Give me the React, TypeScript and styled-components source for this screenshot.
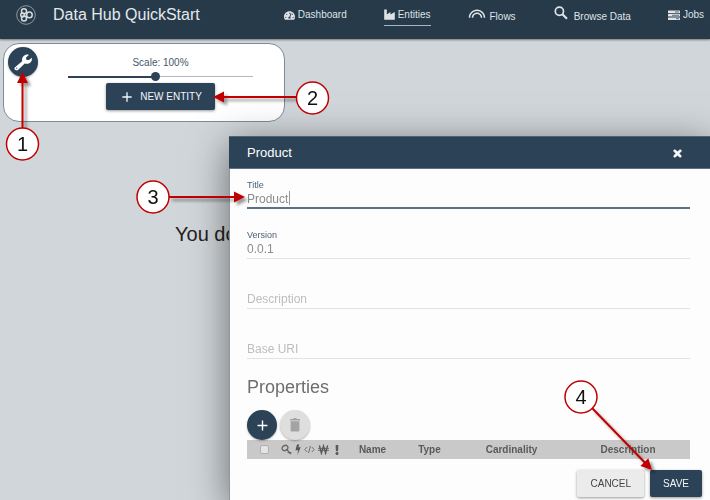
import React, { useState } from "react";
import styled, { createGlobalStyle } from "styled-components";
import { FaTachometerAlt, FaExclamation, FaTimes } from "react-icons/fa";
import { MdAdd, MdLooks } from "react-icons/md";

const navy = "#2b4257";
const red = "#c00000";

const GlobalStyle = createGlobalStyle`
  * { box-sizing: border-box; }
  body {
    margin: 0;
    background: #d1d6da;
    font-family: "Liberation Sans", Arial, sans-serif;
    font-size: 10px;
    color: #222;
    overflow: hidden;
  }
  button, input { font-family: inherit; }
`;

const Page = styled.div`
  min-height: 100vh;
`;

const TopBar = styled.header`
  display: flex;
  align-items: flex-start;
  justify-content: space-between;
  height: 39px;
  padding: 0 6px 0 16px;
  background: #263a4a;
  color: #e4e8ea;
  box-shadow: 0 1px 2px rgba(0, 0, 0, 0.45);
`;

const Brand = styled.a`
  display: flex;
  align-items: center;
  gap: 17px;
  height: 30px;
  font-size: 16px;
  white-space: nowrap;
  color: inherit;
  text-decoration: none;
`;

const Nav = styled.nav`
  display: flex;
  gap: 37px;
`;

const NavLink = styled.a<{ $active?: boolean; $low?: boolean }>`
  display: flex;
  align-items: ${(p) => (p.$low ? "flex-end" : "center")};
  gap: ${(p) => (p.$low ? 4 : 3)}px;
  height: ${(p) => (p.$low ? 23 : 26)}px;
  padding-top: ${(p) => (p.$low ? 0 : 4)}px;
  border-bottom: ${(p) => (p.$active ? "1px solid #aab4bb" : "0")};
  font-size: 10px;
  line-height: 12px;
  white-space: nowrap;
  color: #dfe3e6;
  text-decoration: none;
  svg { flex: none; align-self: ${(p) => (p.$low ? "flex-start" : "center")}; margin-top: ${(p) => (p.$low ? 5 : 0)}px; }
`;

const ToolPanel = styled.section`
  display: flex;
  width: 282px;
  height: 79px;
  margin: 4px 0 0 3px;
  padding: 3px 31px 0 4px;
  background: #fff;
  border: 1px solid #7c8c9a;
  border-radius: 16px;
`;

const RoundButton = styled.button<{ $muted?: boolean }>`
  display: flex;
  align-items: center;
  justify-content: center;
  flex: none;
  width: 30px;
  height: 30px;
  padding: 0;
  border: 0;
  border-radius: 50%;
  background: ${(p) => (p.$muted ? "#dedede" : navy)};
  color: ${(p) => (p.$muted ? "#a3a3a3" : "#fff")};
  box-shadow: 0 1px 2px rgba(0, 0, 0, 0.3);
`;

const ToolControls = styled.div`
  display: flex;
  flex: 1;
  flex-direction: column;
  align-items: center;
  padding: 9px 0 0 30px;
`;

const ScaleLabel = styled.label`
  font-size: 10px;
  line-height: 14px;
  color: #46586a;
`;

const ScaleSlider = styled.input<{ $fill: number }>`
  appearance: none;
  width: 100%;
  height: 9px;
  margin: 2px 0;
  background:
    linear-gradient(${navy}, ${navy}) left center / ${(p) => p.$fill}% 2px no-repeat,
    linear-gradient(#b4b8bb, #b4b8bb) center / 100% 1px no-repeat;
  &::-webkit-slider-thumb {
    appearance: none;
    width: 9px;
    height: 9px;
    border-radius: 50%;
    background: ${navy};
  }
`;

const RaisedButton = styled.button<{ $light?: boolean }>`
  display: flex;
  align-items: center;
  justify-content: center;
  gap: 5px;
  height: 27px;
  padding: 0 13px;
  border: 0;
  border-radius: 2px;
  background: ${(p) => (p.$light ? "#ebebeb" : navy)};
  color: ${(p) => (p.$light ? "#444" : "#f4f6f7")};
  font-size: 10px;
  box-shadow: 0 1px 3px rgba(0, 0, 0, 0.4);
`;

const EmptyNotice = styled.h1`
  margin: 100px 0 0 175px;
  font-size: 20px;
  line-height: 24px;
  font-weight: 400;
`;

const DialogLayer = styled.div`
  position: fixed;
  inset: 0;
  display: flex;
  padding: 136px 0 0 229px;
`;

const Dialog = styled.section`
  flex: 1;
  background: #fdfdfd;
  border-left: 1px solid #8e979e;
  box-shadow: 0 8px 36px rgba(0, 0, 0, 0.5);
`;

const DialogHeader = styled.header`
  display: flex;
  align-items: center;
  justify-content: space-between;
  height: 33px;
  margin-left: -1px;
  padding: 0 27px 0 18px;
  border-top: 1px solid #4f6475;
  border-bottom: 1px solid #5f7282;
  background: ${navy};
  color: #fff;
`;

const DialogTitle = styled.h2`
  margin: 0;
  font-size: 13px;
  font-weight: 400;
`;

const CloseButton = styled.button`
  display: flex;
  padding: 2px 0 0;
  border: 0;
  background: none;
  color: #fff;
`;

const DialogBody = styled.div`
  padding: 10px 20px 0 17px;
`;

const Field = styled.div`
  display: flex;
  flex-direction: column;
  height: 30px;
  margin-bottom: 20px;
`;

const FieldLabel = styled.label`
  height: 12px;
  font-size: 9px;
  line-height: 12px;
  color: #4b5f72;
`;

const FieldInput = styled.input<{ $focused?: boolean }>`
  width: 100%;
  height: 18px;
  padding: 0 0 ${(p) => (p.$focused ? 1 : 2)}px;
  border: 0;
  border-bottom: ${(p) => (p.$focused ? "2px solid #5b7184" : "1px solid #e2e2e2")};
  outline: 0;
  background: transparent;
  font-size: 12px;
  line-height: 15px;
  color: #8c8c8c;
  &::placeholder { color: #bdbdbd; opacity: 1; }
`;

const FocusedValue = styled.div`
  display: grid;
  > * { grid-area: 1 / 1; }
`;

const Caret = styled.span`
  width: 43px;
  height: 14px;
  border-right: 1px solid #999;
  pointer-events: none;
`;

const SectionTitle = styled.h3`
  margin: -3px 0 12px;
  font-size: 18px;
  line-height: 22px;
  font-weight: 400;
  color: #6e6e6e;
`;

const PropertyActions = styled.div`
  display: flex;
  gap: 3px;
`;

const PropertyTable = styled.table`
  width: 100%;
  table-layout: fixed;
  border-collapse: collapse;
  background: #c9c9c9;
`;

const HeadCell = styled.th<{ $width?: number }>`
  width: ${(p) => (p.$width ? `${p.$width}px` : "auto")};
  height: 19px;
  padding: 0;
  font-size: 10px;
  line-height: 12px;
  text-align: center;
  color: #5a5a5a;
`;

const Tick = styled.input`
  appearance: none;
  display: block;
  width: 9px;
  height: 9px;
  margin: 0 0 0 13px;
  border: 1px solid #b0b0b0;
  border-radius: 2px;
  background: #e4e4e4;
`;

const FlagIcons = styled.div`
  display: flex;
  align-items: center;
  gap: 3px;
`;

const DialogFooter = styled.footer`
  display: flex;
  justify-content: flex-end;
  gap: 6px;
  padding: 11px 8px 4px;
`;

const CalloutLayer = styled.svg`
  position: fixed;
  top: 0;
  left: 0;
  pointer-events: none;
  font-family: "Liberation Sans", Arial, sans-serif;
  font-size: 20px;
`;

const Logo = () => (
  <svg width="20" height="20" viewBox="0 0 20 20" fill="none" stroke="#d5dadd" aria-hidden="true">
    <circle cx="10" cy="10" r="9.3" strokeWidth="0.8" opacity="0.75" />
    <g strokeWidth="1.5">
      <circle cx="8" cy="6.2" r="2.5" />
      <circle cx="8" cy="13.6" r="2.5" />
      <circle cx="13.4" cy="9.9" r="2.8" />
      <circle cx="6.6" cy="9.9" r="1.9" />
      <path d="M10.2 7.2 11.6 8.2M10.2 12.6 11.6 11.6" />
    </g>
  </svg>
);

const IndustryIcon = () => (
  <svg width="11" height="11" viewBox="0 0 11 11" fill="currentColor" aria-hidden="true">
    <path d="M0.2 10.8V0.4H2.8V5.6L6.4 3V5.6L10.8 3V10.8Z" />
  </svg>
);

const SearchIcon = () => (
  <svg width="17" height="17" viewBox="0 0 17 17" fill="none" stroke="currentColor" aria-hidden="true">
    <circle cx="6.4" cy="6.2" r="4.1" strokeWidth="1.7" />
    <path d="M9.4 9.2 14 13.8" strokeWidth="2.2" />
  </svg>
);

const JobsIcon = () => (
  <svg width="12" height="11" viewBox="0 0 12 11" aria-hidden="true">
    <g fill="currentColor">
      <rect x="0" y="0.6" width="12" height="2.6" rx="0.5" />
      <rect x="0" y="4" width="12" height="2.6" rx="0.5" />
      <rect x="0" y="7.4" width="12" height="2.6" rx="0.5" />
    </g>
    <path d="M7 1.9H11M4 5.3H11M8 8.7H11" stroke="#526472" strokeWidth="0.9" />
  </svg>
);

const WrenchIcon = () => (
  <svg width="20" height="20" viewBox="0 0 20 20" aria-hidden="true">
    <path
      fill="#fff"
      d="M2 15.2 9.2 9.2C8.5 6.7 9.8 4 12.2 3 13.5 2.5 14.8 2.5 15.9 2.9L13 5.4 13.5 7.9 16 8.1 18.8 5.7C19.3 7.9 18.4 10.2 16.4 11.2 14.7 12 13.1 12 11.7 11.5L5 17.9C3.2 19.3 0.2 17.1 2 15.2Z"
    />
    <circle cx="3.7" cy="16.1" r="0.7" fill={navy} />
  </svg>
);

const TrashIcon = () => (
  <svg width="18" height="18" viewBox="0 0 18 18" fill="currentColor" aria-hidden="true">
    <path d="M4 3H7L7.8 2H10.2L11 3H14V4.4H4ZM4.6 5.3H13.4V14.4Q13.4 15.6 12.2 15.6H5.8Q4.6 15.6 4.6 14.4Z" />
  </svg>
);

const KeyIcon = () => (
  <svg width="11" height="11" viewBox="0 0 11 11" fill="none" stroke="#626262" strokeWidth="1.3" aria-hidden="true">
    <ellipse cx="4" cy="4" rx="3" ry="2.4" transform="rotate(-30 4 4)" />
    <path d="M5.8 5.4 9.2 9.4M6.8 8.8 8.2 7.4M8.6 10 10.4 8.4" />
  </svg>
);

const BoltIcon = () => (
  <svg width="6" height="11" viewBox="0 0 6 11" fill="#555" aria-hidden="true">
    <path d="M2 0.4H4.3L3.4 3.4 5.8 3 2.5 10.7 3.1 6 0.4 6.5Z" />
  </svg>
);

const CodeIcon = () => (
  <svg width="11" height="11" viewBox="0 0 11 11" fill="none" stroke="#707070" aria-hidden="true">
    <path d="M3.2 3 0.8 5.5 3.2 8M7.8 3 10.2 5.5 7.8 8M6.4 2 4.6 9" />
  </svg>
);

const WonIcon = () => (
  <svg width="11" height="11" viewBox="0 0 11 11" fill="none" stroke="#5a5a5a" aria-hidden="true">
    <path d="M1.4 1.4 3.4 9.2 5.5 2 7.6 9.2 9.6 1.4" strokeWidth="1.4" />
    <path d="M0 4.4H11M0 6.4H11" strokeWidth="0.8" />
  </svg>
);

type CalloutProps = { n: number; x: number; y: number; from: [number, number]; to: [number, number] };

const Callout = ({ n, x, y, from, to }: CalloutProps) => {
  const dx = to[0] - from[0];
  const dy = to[1] - from[1];
  const length = Math.hypot(dx, dy);
  const angle = (Math.atan2(dy, dx) * 180) / Math.PI;
  return (
    <g>
      <g filter="url(#soft)">
        <g transform={`translate(${from[0]} ${from[1]}) rotate(${angle})`} fill={red}>
          <rect x="0" y="-1" width={length - 9} height="2" />
          <path d={`M${length} 0 L${length - 11} -5.5 V5.5 Z`} />
        </g>
      </g>
      <circle cx={x} cy={y} r="16" fill="#fff" stroke={red} strokeWidth="1.5" />
      <text x={x} y={y + 7} textAnchor="middle" fill="#111">{n}</text>
    </g>
  );
};

export default function App() {
  const [scale, setScale] = useState(47);
  const [title, setTitle] = useState("Product");
  const [version, setVersion] = useState("0.0.1");

  return (
    <Page>
      <GlobalStyle />
      <TopBar>
        <Brand href="#home"><Logo />Data Hub QuickStart</Brand>
        <Nav>
          <NavLink href="#dashboard"><FaTachometerAlt size={11} />Dashboard</NavLink>
          <NavLink href="#entities" $active><IndustryIcon />Entities</NavLink>
          <NavLink href="#flows" $low><MdLooks size={18} />Flows</NavLink>
          <NavLink href="#browse" $low><SearchIcon />Browse Data</NavLink>
          <NavLink href="#jobs"><JobsIcon />Jobs</NavLink>
        </Nav>
      </TopBar>

      <ToolPanel>
        <RoundButton aria-label="Tools"><WrenchIcon /></RoundButton>
        <ToolControls>
          <ScaleLabel htmlFor="scale">Scale: 100%</ScaleLabel>
          <ScaleSlider id="scale" type="range" $fill={scale} value={scale} onChange={(e) => setScale(Number(e.target.value))} />
          <RaisedButton><MdAdd size={16} />NEW ENTITY</RaisedButton>
        </ToolControls>
      </ToolPanel>

      <EmptyNotice>You do</EmptyNotice>

      <DialogLayer>
        <Dialog role="dialog" aria-labelledby="dialog-title">
          <DialogHeader>
            <DialogTitle id="dialog-title">Product</DialogTitle>
            <CloseButton aria-label="Close"><FaTimes size={11} stroke="#fff" strokeWidth={40} /></CloseButton>
          </DialogHeader>
          <DialogBody>
            <Field>
              <FieldLabel htmlFor="title">Title</FieldLabel>
              <FocusedValue>
                <FieldInput id="title" $focused value={title} onChange={(e) => setTitle(e.target.value)} />
                <Caret />
              </FocusedValue>
            </Field>
            <Field>
              <FieldLabel htmlFor="version">Version</FieldLabel>
              <FieldInput id="version" value={version} onChange={(e) => setVersion(e.target.value)} />
            </Field>
            <Field>
              <FieldLabel htmlFor="description" />
              <FieldInput id="description" aria-label="Description" placeholder="Description" />
            </Field>
            <Field>
              <FieldLabel htmlFor="base-uri" />
              <FieldInput id="base-uri" aria-label="Base URI" placeholder="Base URI" />
            </Field>
            <SectionTitle>Properties</SectionTitle>
            <PropertyActions>
              <RoundButton aria-label="Add property"><MdAdd size={17} /></RoundButton>
              <RoundButton $muted aria-label="Delete property"><TrashIcon /></RoundButton>
            </PropertyActions>
            <PropertyTable>
              <thead>
                <tr>
                  <HeadCell $width={34}><Tick type="checkbox" aria-label="Select all" /></HeadCell>
                  <HeadCell $width={62}>
                    <FlagIcons>
                      <KeyIcon /><BoltIcon /><CodeIcon /><WonIcon /><FaExclamation size={10} />
                    </FlagIcons>
                  </HeadCell>
                  <HeadCell $width={59}>Name</HeadCell>
                  <HeadCell $width={55}>Type</HeadCell>
                  <HeadCell $width={109}>Cardinality</HeadCell>
                  <HeadCell>Description</HeadCell>
                </tr>
              </thead>
            </PropertyTable>
          </DialogBody>
          <DialogFooter>
            <RaisedButton $light>CANCEL</RaisedButton>
            <RaisedButton>SAVE</RaisedButton>
          </DialogFooter>
        </Dialog>
      </DialogLayer>

      <CalloutLayer width="708" height="500" viewBox="0 0 708 500">
        <defs>
          <filter id="soft" filterUnits="userSpaceOnUse" x="0" y="0" width="708" height="500">
            <feDropShadow dx="3" dy="3" stdDeviation="1.5" floodColor="#000" floodOpacity="0.4" />
          </filter>
        </defs>
        <Callout n={1} x={22.5} y={144} from={[22.5, 129]} to={[22.5, 72]} />
        <Callout n={2} x={312.5} y={98} from={[297, 97]} to={[213, 97]} />
        <Callout n={3} x={153} y={197} from={[169, 197]} to={[245, 197]} />
        <Callout n={4} x={581} y={397} from={[592, 408]} to={[652, 470]} />
      </CalloutLayer>
    </Page>
  );
}
